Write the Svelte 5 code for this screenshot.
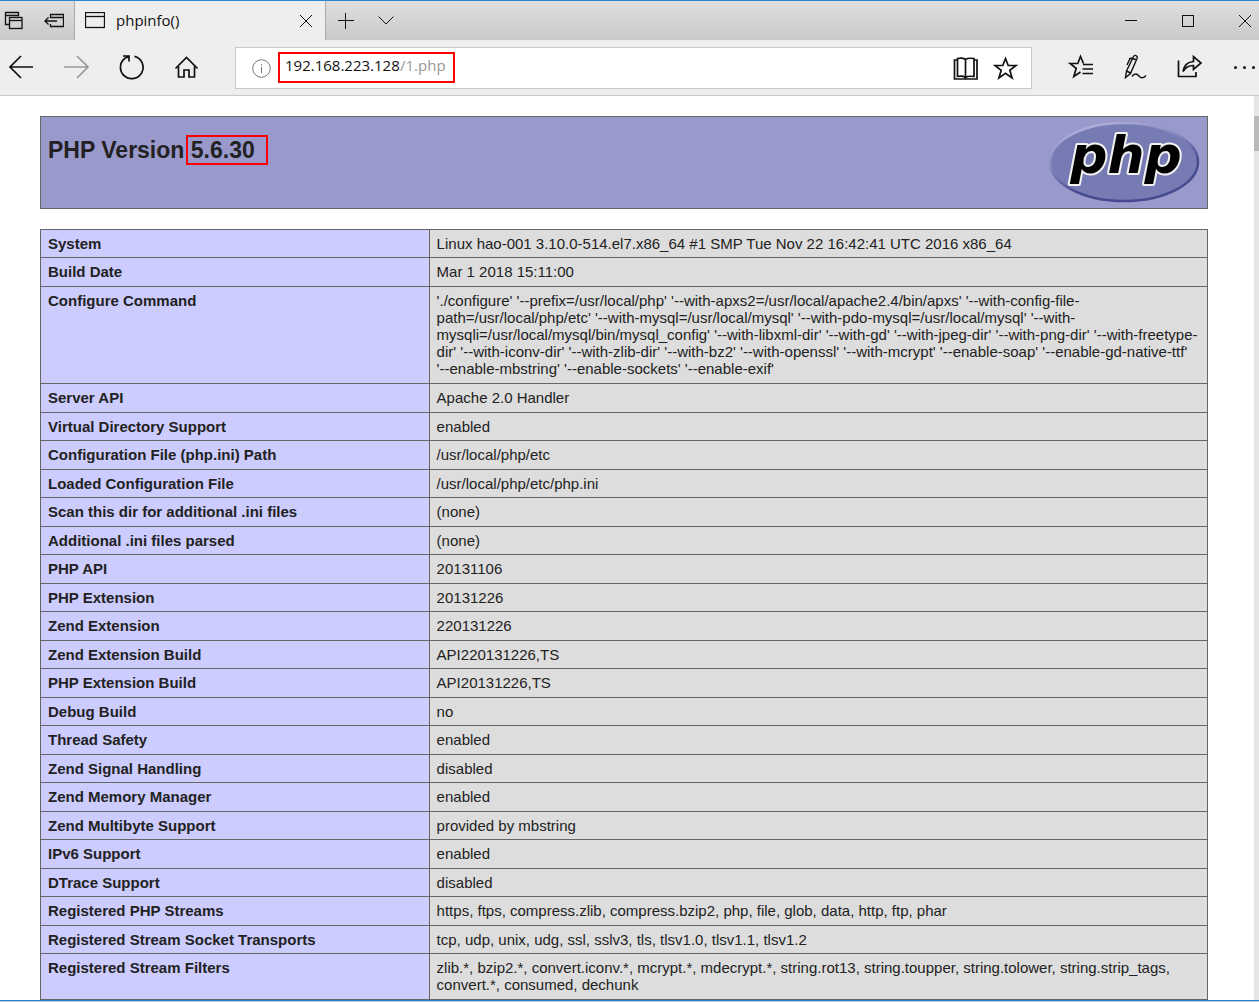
<script>
  const rows = [
    ['System', 'Linux hao-001 3.10.0-514.el7.x86_64 #1 SMP Tue Nov 22 16:42:41 UTC 2016 x86_64'],
    ['Build Date', 'Mar 1 2018 15:11:00'],
    ['Configure Command', "'./configure' '--prefix=/usr/local/php' '--with-apxs2=/usr/local/apache2.4/bin/apxs' '--with-config-file-path=/usr/local/php/etc' '--with-mysql=/usr/local/mysql' '--with-pdo-mysql=/usr/local/mysql' '--with-mysqli=/usr/local/mysql/bin/mysql_config' '--with-libxml-dir' '--with-gd' '--with-jpeg-dir' '--with-png-dir' '--with-freetype-dir' '--with-iconv-dir' '--with-zlib-dir' '--with-bz2' '--with-openssl' '--with-mcrypt' '--enable-soap' '--enable-gd-native-ttf' '--enable-mbstring' '--enable-sockets' '--enable-exif'"],
    ['Server API', 'Apache 2.0 Handler'],
    ['Virtual Directory Support', 'enabled'],
    ['Configuration File (php.ini) Path', '/usr/local/php/etc'],
    ['Loaded Configuration File', '/usr/local/php/etc/php.ini'],
    ['Scan this dir for additional .ini files', '(none)'],
    ['Additional .ini files parsed', '(none)'],
    ['PHP API', '20131106'],
    ['PHP Extension', '20131226'],
    ['Zend Extension', '220131226'],
    ['Zend Extension Build', 'API220131226,TS'],
    ['PHP Extension Build', 'API20131226,TS'],
    ['Debug Build', 'no'],
    ['Thread Safety', 'enabled'],
    ['Zend Signal Handling', 'disabled'],
    ['Zend Memory Manager', 'enabled'],
    ['Zend Multibyte Support', 'provided by mbstring'],
    ['IPv6 Support', 'enabled'],
    ['DTrace Support', 'disabled'],
    ['Registered PHP Streams', 'https, ftps, compress.zlib, compress.bzip2, php, file, glob, data, http, ftp, phar'],
    ['Registered Stream Socket Transports', 'tcp, udp, unix, udg, ssl, sslv3, tls, tlsv1.0, tlsv1.1, tlsv1.2'],
    ['Registered Stream Filters', 'zlib.*, bzip2.*, convert.iconv.*, mcrypt.*, mdecrypt.*, string.rot13, string.toupper, string.tolower, string.strip_tags, convert.*, consumed, dechunk'],
  ];
  let host = $state('192.168.223.128');
</script>

<div class="window">
  <header class="titlebar">
    <div class="tab-tools">
      <button aria-label="Tabs you've set aside">
        <svg width="20" height="20" viewBox="0 0 20 20"><path d="M5 13.5H1.5V1.5H14.5V5.5M1.5 4.5H14.5" /><rect x="5.5" y="6.500" width="12.500" height="11" /><path d="M5.5 9.5H18" /></svg>
      </button>
      <button aria-label="Set these tabs aside">
        <svg width="20" height="20" viewBox="0 0 20 20"><path d="M6.5 7V3.5H19.5V15.5H6.5V13M6.5 6.500H19.5M0.5 10H13M4.5 6.500L1 10L4.5 13.5" /></svg>
      </button>
    </div>
    <div class="tab">
      <svg width="20" height="18" viewBox="0 0 20 18"><rect x="0.5" y="0.5" width="19" height="15" /><path d="M0.5 4.5H19.5" /></svg>
      <span class="tab-title">phpinfo()</span>
      <button aria-label="Close tab">
        <svg width="14" height="14" viewBox="0 0 14 14"><path d="M1 1L13 13M13 1L1 13" /></svg>
      </button>
    </div>
    <div class="tab-actions">
      <button aria-label="New tab">
        <svg width="16" height="16" viewBox="0 0 16 16"><path d="M7.5 0V16M0 7.5H16" /></svg>
      </button>
      <button aria-label="Show tab previews">
        <svg width="16" height="16" viewBox="0 0 16 16"><path d="M0.5 3.500L8 11L15.5 3.500" /></svg>
      </button>
    </div>
    <div class="window-controls">
      <button aria-label="Minimize"><svg width="14" height="14" viewBox="0 0 14 14"><path d="M1 6.5H13" /></svg></button>
      <button aria-label="Maximize"><svg width="14" height="14" viewBox="0 0 14 14"><rect x="1.5" y="1.5" width="11" height="11" /></svg></button>
      <button aria-label="Close"><svg width="14" height="14" viewBox="0 0 14 14"><path d="M1 1L13 13M13 1L1 13" /></svg></button>
    </div>
  </header>

  <nav class="toolbar">
    <div class="history">
      <button aria-label="Back"><svg width="32" height="32" viewBox="0 0 32 32"><path d="M16 5L5 16L16 27M5 16H28" /></svg></button>
      <button aria-label="Forward" class="disabled" disabled><svg width="32" height="32" viewBox="0 0 32 32"><path d="M17 5L28 16L17 27M28 16H4" /></svg></button>
      <button aria-label="Refresh"><svg width="32" height="32" viewBox="0 0 32 32"><path d="M19.5 5.4A11.3 11.3 0 1 1 10 7.3L14 5.5M8 5H14V10.5" /></svg></button>
      <button aria-label="Home"><svg width="32" height="32" viewBox="0 0 32 32"><path d="M5.5 17.5L16.5 6.5L27.5 17.5M8.5 15.5V26H14V19H19V26H24.500V15.5" /></svg></button>
    </div>

    <div class="address">
      <button class="info" aria-label="Site information">
        <svg width="20" height="20" viewBox="0 0 20 20"><circle cx="10.500" cy="10.500" r="8.800" /><path d="M10.500 9V15M10.500 6V7.500" /></svg>
      </button>
      <label class="url">
        <input type="text" aria-label="Address" bind:value={host} />
        <span>/1.php</span>
      </label>
      <div class="page-actions">
        <button aria-label="Reading view">
          <svg width="26" height="26" viewBox="0 0 26 26"><path d="M12.500 4.500C10.500 3 7.500 3 4.500 3.500V21.500C7.500 21 10.500 21 12.500 22.500C14.500 21 17.500 21 21 21.500V3.500C17.500 3 14.500 3 12.500 4.500ZM12.500 4.500V22.500M4.500 5H1.500V24H24V5H21" /></svg>
        </button>
        <button aria-label="Add to favorites">
          <svg width="26" height="26" viewBox="0 0 26 26"><path d="M12.500 3.500L15.200 10.500H23L16.800 15.200L19.100 23L12.500 18.300L5.900 23L8.200 15.200L2 10.500H9.800Z" /></svg>
        </button>
      </div>
    </div>

    <div class="hub">
      <button aria-label="Favorites">
        <svg width="26" height="26" viewBox="0 0 26 26"><path d="M15.500 9.500L12.500 2.500L9.800 9.500H2L8.200 14.200L5.800 22.500L12.500 18M15 10.500H25M14.500 15H25M14.500 19.500H25" /></svg>
      </button>
      <button aria-label="Add notes">
        <svg width="26" height="26" viewBox="0 0 26 26"><path class="fine" d="M3.500 23.500L4.500 17L11.500 2.500C12.500 0.500 16 1.500 15 4.500L8.500 19.500ZM4.500 17L8.500 19M11 4L8 4.500L5 11M11 4.500L14.500 6M10 22.500C12.500 19 15 19.500 17 22C19 24.500 21.500 24.500 24 21.500" /></svg>
      </button>
      <button aria-label="Share">
        <svg width="26" height="26" viewBox="0 0 26 26"><path d="M2.500 6.500V22.500H20V18M7 17.500C8 11 11 8 17.500 7.500V2.500L25 9L17.500 15.500V11.500C13 11.500 9.500 13 7 17.500Z" /></svg>
      </button>
      <button aria-label="More">
        <svg width="26" height="26" viewBox="0 0 26 26"><g class="dots"><circle cx="5.500" cy="13.500" r="1.500" /><circle cx="14.500" cy="13.500" r="1.500" /><circle cx="23.500" cy="13.500" r="1.500" /></g></svg>
      </button>
    </div>
  </nav>

  <div class="viewport">
    <main>
      <section class="banner">
        <h1>PHP Version <span class="marked">5.6.30</span></h1>
        <svg class="logo" width="152" height="82" viewBox="0 0 152 82" role="img" aria-label="PHP logo">
          <defs>
            <linearGradient id="rim" x1="0.2" y1="0" x2="0.7" y2="1">
              <stop offset="0" stop-color="#b4b4dc" />
              <stop offset="0.4" stop-color="#8488bd" />
              <stop offset="0.7" stop-color="#484a90" />
              <stop offset="1" stop-color="#484a90" />
            </linearGradient>
          </defs>
          <ellipse cx="76" cy="41" rx="74" ry="39" fill="#777bb3" stroke="url(#rim)" stroke-width="2.500" />
          <text x="78" y="52" text-anchor="middle">php</text>
        </svg>
      </section>

      <table>
        <tbody>
          {#each rows as [name, value]}
            <tr class:tall={value.length > 200}>
              <th scope="row">{name}</th>
              <td>{value}</td>
            </tr>
          {/each}
        </tbody>
      </table>
    </main>
    <div class="scrollbar"><div class="thumb"></div></div>
  </div>
</div>

<style>
  :global(body) {
    margin: 0;
    background: #c9ccd2;
  }
  .window {
    display: flex;
    flex-direction: column;
    height: calc(100vh - 1px);
    box-sizing: border-box;
    border-top: 1px solid #2a86d3;
    border-bottom: 1px solid #1f83d6;
    background: #fff;
    color: #222;
    font-family: "Liberation Sans", Arial, sans-serif;
    overflow: hidden;
  }
  button {
    display: flex;
    align-items: center;
    justify-content: center;
    padding: 0;
    border: 0;
    background: none;
    color: #111;
  }
  svg {
    display: block;
    flex: none;
    fill: none;
    stroke: currentColor;
    stroke-width: 1;
  }

  .titlebar {
    display: flex;
    flex: none;
    height: 39px;
    background: linear-gradient(#dfdfdf, #c9c9c9);
    color: #111;
  }
  .tab-tools {
    display: flex;
    align-items: center;
    gap: 20px;
    width: 74px;
    padding-left: 4px;
    box-sizing: border-box;
  }
  .tab-tools svg {
    stroke-width: 1.3;
  }
  .tab > svg {
    stroke-width: 1.3;
  }
  .tab {
    display: flex;
    align-items: center;
    width: 252px;
    padding: 0 12px 0 10px;
    box-sizing: border-box;
    border-left: 1px solid #aaa;
    border-right: 1px solid #aaa;
    background: #eee;
  }
  .tab-title {
    flex: 1;
    margin-left: 11px;
    padding-bottom: 2px;
    font: 15px/20px "Open Sans", "Noto Sans", sans-serif;
  }
  .tab-actions {
    display: flex;
    align-items: center;
    gap: 24px;
    padding-left: 12px;
  }
  .window-controls {
    display: flex;
    align-items: center;
    gap: 43px;
    margin-left: auto;
    padding-right: 7px;
  }

  .toolbar {
    display: flex;
    flex: none;
    align-items: center;
    height: 55px;
    border-bottom: 1px solid #c8c8c8;
    background: #eee;
  }
  .history {
    display: flex;
    gap: 23px;
    padding: 0 0 2px 5px;
  }
  .history svg,
  .page-actions svg,
  .hub svg {
    stroke-width: 1.7;
  }
  .hub svg .fine {
    stroke-width: 1.4;
  }
  .hub svg .dots {
    fill: #111;
    stroke: none;
  }
  .disabled {
    color: #999;
  }
  .address {
    display: flex;
    flex: 1;
    align-items: center;
    height: 42px;
    margin: 0 36px 0 33px;
    padding: 0 12px 0 15px;
    box-sizing: border-box;
    border: 1px solid #c8c8c8;
    background: #fff;
  }
  .info {
    color: #777;
  }
  .url {
    display: flex;
    width: 177px;
    height: 31px;
    margin-left: 7px;
    padding: 1px 5px;
    box-sizing: border-box;
    border: 2px solid #f00;
    color: #999;
    font: 15px/20px "Open Sans", "Noto Sans", sans-serif;
  }
  .url input {
    width: 115px;
    height: 20px;
    padding: 0;
    border: 0;
    outline: 0;
    background: none;
    color: #111;
    font: inherit;
  }
  .page-actions {
    display: flex;
    gap: 14px;
    margin-left: auto;
  }
  .hub {
    display: flex;
    gap: 28px;
    padding: 0 3px 2px 0;
  }

  .viewport {
    display: flex;
    flex: 1;
    min-height: 0;
    overflow: hidden;
  }
  main {
    flex: 1;
    min-width: 0;
    padding: 20px 46px 0 40px;
  }
  .scrollbar {
    width: 5px;
    padding-top: 20px;
    background: #e6e6e6;
  }
  .thumb {
    height: 35px;
    background: #b9b9b9;
  }
  .banner {
    display: flex;
    justify-content: space-between;
    height: 93px;
    margin-bottom: 20px;
    padding: 4px 7px 0 7px;
    box-sizing: border-box;
    border: 1px solid #666;
    background: #99c;
  }
  h1 {
    margin: 16px 0 0;
    font-size: 23px;
    line-height: 26px;
  }
  .marked {
    position: relative;
  }
  .marked::after {
    content: "";
    position: absolute;
    inset: -2px -13px -2px -5px;
    border: 2px solid #f00;
  }
  .logo text {
    fill: #000;
    stroke: #f2f2f2;
    stroke-width: 4;
    stroke-linejoin: round;
    paint-order: stroke;
    font: italic bold 52px "DejaVu Sans", sans-serif;
  }
  table {
    width: 100%;
    border-collapse: collapse;
    table-layout: fixed;
    font-size: 15px;
    line-height: 17px;
  }
  th,
  td {
    padding: 5px 9px 5px 7px;
    border: 1px solid #666;
    text-align: left;
    vertical-align: top;
  }
  th {
    width: 33.3%;
    box-sizing: border-box;
    background: #ccf;
  }
  td {
    background: #ddd;
  }
  tr:nth-child(even) > *,
  tr.tall > * {
    padding-bottom: 6px;
  }
</style>
